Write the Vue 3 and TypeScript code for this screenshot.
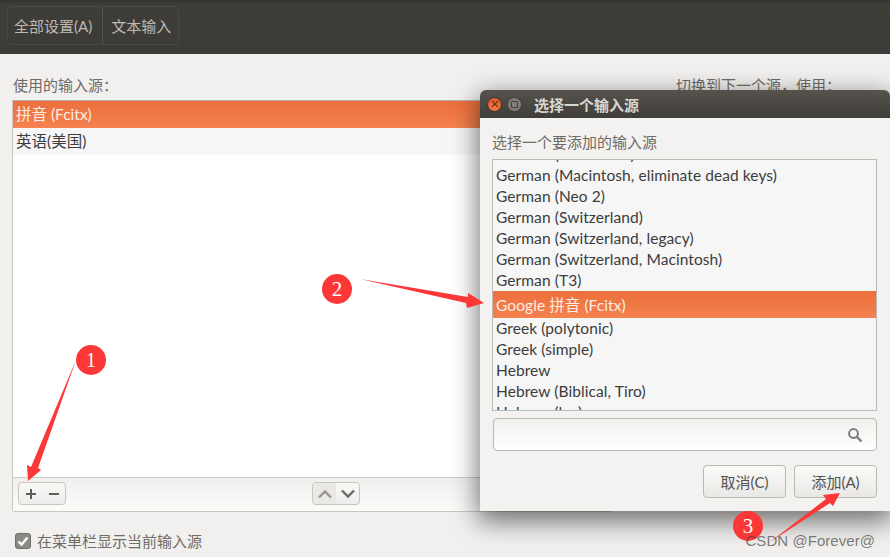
<script setup lang="ts">
const rows: string[] = [
  'German (Macintosh)',
  'German (Macintosh, eliminate dead keys)',
  'German (Neo 2)',
  'German (Switzerland)',
  'German (Switzerland, legacy)',
  'German (Switzerland, Macintosh)',
  'German (T3)',
]
const rowsAfter: string[] = [
  'Greek (polytonic)',
  'Greek (simple)',
  'Hebrew',
  'Hebrew (Biblical, Tiro)',
  'Hebrew (lyx)',
]
</script>

<template>
  <div class="screen">
    <header class="topbar">
      <nav class="crumbs">
        <span class="crumb first">全部设置(A)</span>
        <span class="crumb">文本输入</span>
      </nav>
    </header>

    <main class="content">
      <div class="columns">
        <section class="left">
          <div class="label inset">使用的输入源：</div>
          <div class="source-box">
            <div class="source-list">
              <div class="source sel">拼音 (Fcitx)</div>
              <div class="source alt">英语(美国)</div>
            </div>
            <div class="toolbar">
              <div class="btn-group">
                <span class="tool">
                  <svg width="14" height="14" viewBox="0 0 14 14"><path d="M7 2v10M2 7h10" stroke="#5d5d5a" stroke-width="2" fill="none" /></svg>
                </span>
                <span class="tool">
                  <svg width="14" height="14" viewBox="0 0 14 14"><path d="M2 7h10" stroke="#5d5d5a" stroke-width="2" fill="none" /></svg>
                </span>
              </div>
              <div class="btn-group arrows">
                <span class="tool off">
                  <svg width="14" height="14" viewBox="0 0 14 14"><path d="M1 10.5L7 4.5 13 10.5" stroke="#98968f" stroke-width="2.4" fill="none" /></svg>
                </span>
                <span class="tool">
                  <svg width="14" height="14" viewBox="0 0 14 14"><path d="M1 3.5L7 9.5 13 3.5" stroke="#6a6a66" stroke-width="2.4" fill="none" /></svg>
                </span>
              </div>
            </div>
          </div>
          <label class="check-row">
            <span class="check">
              <svg width="12" height="12" viewBox="0 0 12 12"><path d="M1.5 6.5L4.6 9.6 10.5 2.6" stroke="#fff" stroke-width="2.4" fill="none" /></svg>
            </span>
            <span class="label">在菜单栏显示当前输入源</span>
          </label>
        </section>
        <aside class="right">
          <div class="label">切换到下一个源，使用：</div>
        </aside>
      </div>
    </main>

    <div class="dialog">
      <div class="titlebar">
        <span class="wbtn close">
          <svg width="8" height="8" viewBox="0 0 8 8"><path d="M1.2 1.2l5.6 5.6M6.8 1.2L1.2 6.8" stroke="#5b2a14" stroke-width="1.2" /></svg>
        </span>
        <span class="wbtn max"><i></i></span>
        <span class="title">选择一个输入源</span>
      </div>
      <div class="dialog-body">
        <div class="label dlabel">选择一个要添加的输入源</div>
        <div class="picker">
          <div class="picker-inner">
            <div v-for="r in rows" :key="r" class="prow">{{ r }}</div>
            <div class="prow psel">Google 拼音 (Fcitx)</div>
            <div v-for="r in rowsAfter" :key="r" class="prow">{{ r }}</div>
          </div>
        </div>
        <div class="search">
          <svg width="16" height="16" viewBox="0 0 16 16"><circle cx="6.5" cy="6.5" r="4.4" stroke="#7d7d7b" stroke-width="2" fill="none" /><path d="M9.8 9.8L14.5 14.5" stroke="#7d7d7b" stroke-width="2.4" /></svg>
        </div>
        <div class="actions">
          <button class="btn">取消(C)</button>
          <button class="btn">添加(A)</button>
        </div>
      </div>
    </div>

    <svg class="marks" width="890" height="557" viewBox="0 0 890 557">
      <g fill="#fb3737">
        <polygon points="76,360 38,468 41,470 28,481 27,465 31,467" />
        <polygon points="360,279 468,297 468,293 484,303 467,308 466,303" />
        <polygon points="770,542 826,499 823,495 840,493 833,506 830,503" />
        <circle cx="91" cy="360" r="15" />
        <circle cx="337" cy="289" r="15" />
        <circle cx="748" cy="526" r="15" />
      </g>
      <g class="num">
        <text x="91" y="367">1</text>
        <text x="337" y="296">2</text>
        <text x="748" y="533">3</text>
      </g>
    </svg>
    <div class="watermark">CSDN @Forever@</div>
  </div>
</template>

<style>
body { margin: 0; }
</style>

<style scoped>
.screen {
  position: relative;
  width: 890px;
  height: 557px;
  overflow: hidden;
  background: #f1f0ee;
  display: flex;
  flex-direction: column;
  font-family: "Lato", "Noto Sans CJK SC", sans-serif;
  font-size: 15px;
  color: #3c3c3c;
}
.topbar {
  height: 54px;
  box-sizing: border-box;
  flex: none;
  background: linear-gradient(#34322e 0, #3f3d38 4px, #3d3b37 100%);
  padding: 6px 0 0 7px;
}
.crumbs {
  display: inline-flex;
  height: 39px;
  border: 1px solid #4a4843;
  border-radius: 4px;
  box-sizing: border-box;
}
.crumb {
  display: flex;
  align-items: center;
  padding: 0 7px 0 8px;
  color: #bdbab3;
}
.first { padding: 0 10px 0 6px; }
.crumb + .crumb { border-left: 1px solid #55534e; }
.content { flex: 1; padding: 0 12px; min-height: 0; }
.columns { display: flex; height: 100%; }
.left { width: 600px; flex: none; display: flex; flex-direction: column; padding-top: 21px; box-sizing: border-box; }
.right { padding: 21px 0 0 64px; white-space: nowrap; }
.label { color: #6f6c67; line-height: 20px; }
.inset { margin-left: 1px; }
.source-box {
  margin-top: 5px;
  height: 412px;
  box-sizing: border-box;
  border: 1px solid #c9c7c2;
  border-radius: 0 0 3px 3px;
  border-top-color: #b4b1ab;
  display: flex;
  flex-direction: column;
  background: #fff;
}
.source-list { flex: 1; }
.source { height: 27px; line-height: 27px; padding-left: 3px; font-size: 15.5px; }
.sel { background: linear-gradient(#ec6f3c, #f5824f); color: #fbece4; }
.alt { background: #f6f6f6; }
.toolbar {
  flex: none;
  height: 34px;
  box-sizing: border-box;
  border-top: 1px solid #cfcdc8;
  background: linear-gradient(#f0efed, #fbfbfa);
  display: flex;
  align-items: center;
  gap: 246px;
  padding: 0 0 2px 5px;
}
.btn-group {
  display: flex;
  height: 23px;
  border: 1px solid #c8c6c1;
  border-radius: 4px;
  box-sizing: border-box;
  background: linear-gradient(#f8f8f7, #eeedeb);
  overflow: hidden;
}
.tool { width: 23px; display: flex; align-items: center; justify-content: center; }
.off { background: #e9e8e5; }
.check-row { display: flex; align-items: center; gap: 6px; margin: 19px 0 0 3px; }
.check {
  width: 16px;
  height: 16px;
  border-radius: 3px;
  background: #8b8a87;
  border: 1px solid #6f6e6b;
  box-sizing: border-box;
  display: flex;
  align-items: center;
  justify-content: center;
}
.dialog {
  position: absolute;
  left: 480px;
  top: 90px;
  width: 410px;
  height: 421px;
  border-radius: 6px 6px 0 0;
  background: #f3f2f0;
  box-shadow: 0 8px 26px 2px rgba(0, 0, 0, 0.55);
  display: flex;
  flex-direction: column;
}
.titlebar {
  height: 28px;
  flex: none;
  display: flex;
  align-items: center;
  padding-left: 7px;
  border-radius: 6px 6px 0 0;
  background: linear-gradient(#56534d, #3f3d38);
}
.wbtn {
  width: 15px;
  height: 15px;
  border-radius: 50%;
  display: flex;
  align-items: center;
  justify-content: center;
  margin-right: 5px;
  box-sizing: border-box;
}
.close { background: radial-gradient(circle at 50% 70%, #f47f4c, #db4d1f); border: 1px solid #3a3732; }
.max { background: #7f7d77; border: 1px solid #3f3d38; }
.max i { width: 7px; height: 7px; border: 1px solid #403e39; border-radius: 1px; box-sizing: border-box; display: block; }
.title { margin-left: 7px; color: #d8d6d0; font-weight: 700; }
.dialog-body { flex: 1; padding: 14px 13px 13px 12px; display: flex; flex-direction: column; }
.dlabel { line-height: 20px; }
.picker {
  margin-top: 7px;
  height: 252px;
  flex: none;
  box-sizing: border-box;
  border: 1px solid #bdbbb6;
  background: #f6f6f6;
  overflow: hidden;
}
.picker-inner { margin-top: -16px; }
.prow {
  height: 21px;
  line-height: 21px;
  padding-left: 3px;
  white-space: nowrap;
  font-size: 15.5px;
  letter-spacing: 0.08px;
}
.psel {
  height: 27px;
  line-height: 29px;
  background: linear-gradient(#ec6f3c, #f5824f);
  color: #fbece4;
}
.search {
  margin: 7px 0 0 1px;
  height: 33px;
  flex: none;
  box-sizing: border-box;
  border: 1px solid #b9b7b2;
  border-radius: 4px;
  background: linear-gradient(#f1f0ee, #fff);
  display: flex;
  align-items: center;
  justify-content: flex-end;
  padding-right: 13px;
}
.actions { display: flex; justify-content: flex-end; gap: 8px; margin-top: 14px; }
.btn {
  width: 83px;
  height: 33px;
  border: 1px solid #bbb9b4;
  border-radius: 4px;
  background: linear-gradient(#fafaf9, #e9e8e5);
  font: inherit;
  color: #55524e;
  padding: 0;
}
.marks { position: absolute; left: 0; top: 0; pointer-events: none; }
.num text {
  fill: #fff;
  font-family: "Liberation Serif", serif;
  font-size: 21px;
  text-anchor: middle;
}
.watermark {
  position: absolute;
  right: 15px;
  top: 532px;
  line-height: 18px;
  font-family: "Liberation Sans", sans-serif;
  font-size: 15px;
  color: rgba(70, 70, 70, 0.7);
  letter-spacing: 0.05px;
}
</style>
